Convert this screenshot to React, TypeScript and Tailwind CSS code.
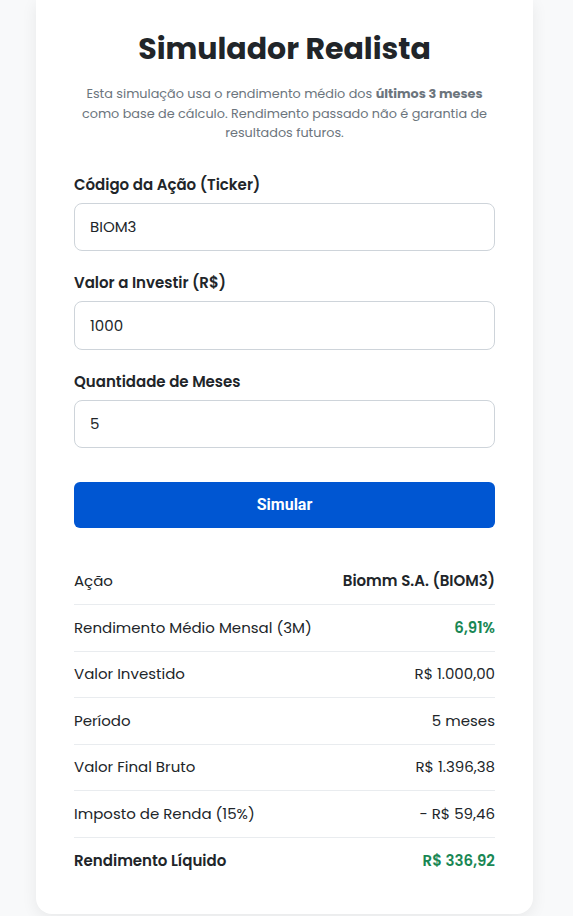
import React from "react";

const rows: { label: string; value: string; strong?: boolean; green?: boolean; boldLabel?: boolean }[] = [
  { label: "Ação", value: "Biomm S.A. (BIOM3)", strong: true },
  { label: "Rendimento Médio Mensal (3M)", value: "6,91%", strong: true, green: true },
  { label: "Valor Investido", value: "R$ 1.000,00" },
  { label: "Período", value: "5 meses" },
  { label: "Valor Final Bruto", value: "R$ 1.396,38" },
  { label: "Imposto de Renda (15%)", value: "- R$ 59,46" },
  { label: "Rendimento Líquido", value: "R$ 336,92", strong: true, green: true, boldLabel: true },
];

function Field({ label, value }: { label: string; value: string }) {
  return (
    <div className="flex flex-col gap-[7px]">
      <label className="text-[15px] leading-[22px] font-semibold text-[#212529]">{label}</label>
      <input
        readOnly
        value={value}
        className="h-[48.5px] w-full rounded-[8px] border border-[#ced4da] bg-white px-[15px] text-[15px] text-[#212529] outline-none"
        style={{ fontFamily: "Poppins, 'Open Sans', sans-serif" }}
      />
    </div>
  );
}

export default function App() {
  return (
    <div
      className="min-h-screen bg-[#f8f9fa] flex"
      style={{ fontFamily: "Poppins, 'Open Sans', sans-serif" }}
    >
      <div className="ml-[36px] w-[497px] bg-white rounded-b-[16px] shadow-[0_4px_16px_rgba(0,0,0,0.07)] px-[38px] pt-[31px] pb-[30px] h-[914px]">
        <h1 className="text-[30px] leading-[36px] font-bold text-[#212529] text-center">
          Simulador Realista
        </h1>
        <p className="mt-[17px] text-[12.8px] leading-[19.5px] text-[#6c757d] text-center">
          Esta simulação usa o rendimento médio dos <b className="font-bold">últimos 3 meses</b> como base de cálculo.
          Rendimento passado não é garantia de resultados futuros.
        </p>
        <div className="mt-[31px] flex flex-col gap-[21px]">
          <Field label="Código da Ação (Ticker)" value="BIOM3" />
          <Field label="Valor a Investir (R$)" value="1000" />
          <Field label="Quantidade de Meses" value="5" />
        </div>
        <button
          className="mt-[34px] w-full h-[45.5px] rounded-[6px] bg-[#0056d2] text-white text-[16px] font-bold"
          style={{ fontFamily: "Roboto, Arial, sans-serif" }}
        >
          Simular
        </button>
        <div className="mt-[31px]">
          {rows.map((r, i) => (
            <div
              key={r.label}
              className={`flex items-center justify-between h-[46.5px] text-[15px] ${
                i < rows.length - 1 ? "border-b border-[#e9ecef]" : ""
              }`}
            >
              <span className={r.boldLabel ? "font-semibold text-[#212529]" : "text-[#212529]"}>{r.label}</span>
              <span
                className={`${r.strong ? "font-semibold" : ""} ${r.green ? "text-[#198754]" : "text-[#212529]"}`}
              >
                {r.value}
              </span>
            </div>
          ))}
        </div>
      </div>
    </div>
  );
}
